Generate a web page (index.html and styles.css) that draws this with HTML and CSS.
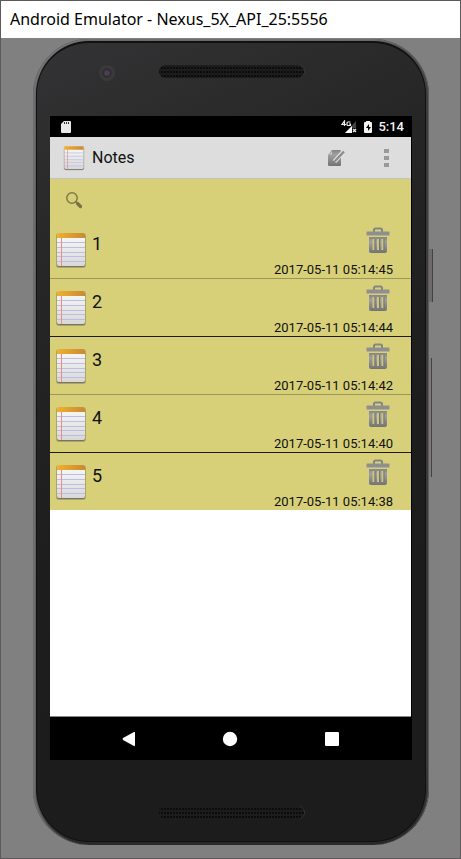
FILE: index.html
```html
<!DOCTYPE html>
<html lang="en">
<head>
<meta charset="utf-8">
<title>Android Emulator - Nexus_5X_API_25:5556</title>
<link rel="stylesheet" href="styles.css">
</head>
<body>
<svg class="defs" aria-hidden="true">
  <defs>
    <linearGradient id="binding"><stop offset="0" stop-color="#f2b02d"/><stop offset="1" stop-color="#c88a35"/></linearGradient>
    <linearGradient id="paper" x2="0" y2="1"><stop offset="0" stop-color="#fafafa"/><stop offset="1" stop-color="#d8d8d8"/></linearGradient>
    <linearGradient id="metal" x2="0" y2="1"><stop offset="0" stop-color="#858585"/><stop offset="0.3" stop-color="#a0a0a0"/><stop offset="1" stop-color="#737373"/></linearGradient>
    <pattern id="mesh" x="2" y="2" width="3" height="4" patternUnits="userSpaceOnUse"><path d="M0 0h2v2H0z" fill="#0c0c0c"/></pattern>
    <symbol id="note" viewBox="0 0 32 38">
      <rect x="1" y="2" width="30" height="35" rx="3" fill="#5b5a3c" opacity="0.35"/>
      <rect x="2" y="2" width="28" height="34" rx="2" fill="#77756a"/>
      <rect x="2" y="2" width="28" height="33" rx="2" fill="url(#paper)"/>
      <path d="M2 7V4q0-2 2-2h24q2 0 2 2v3z" fill="url(#binding)"/>
      <path d="M2 11.500h28M2 16.500h28M2 21.500h28M2 25.500h28M2 30.500h28" stroke="#bdbde2"/>
      <path d="M6.500 7v28" stroke="#f08a8a"/>
    </symbol>
    <symbol id="trash" viewBox="0 0 24 26">
      <path d="M8 5V3q0-1.500 1.500-1.500h5Q16 1.500 16 3v2" fill="none" stroke="#858581" stroke-width="2"/>
      <rect x="0.500" y="4.500" width="23" height="4" rx="0.500" fill="#8f8f8f"/>
      <path d="M3 10h18v14q0 2-2 2H5q-2 0-2-2z" fill="url(#metal)"/>
      <path d="M7.500 12v11M12 12v11M16.500 12v11" stroke="#cbc581" stroke-width="2"/>
      <path d="M9 12v11M13.500 12v11M18 12v11" stroke="#77766c"/>
    </symbol>
  </defs>
</svg>
<div class="window">
  <header class="titlebar">Android Emulator - Nexus_5X_API_25:5556</header>
  <div class="desk">
    <div class="phone">
      <span class="side-key power"></span>
      <span class="side-key volume"></span>
      <div class="bezel">
        <div class="forehead">
          <span class="camera"></span>
          <svg class="speaker"><rect width="100%" height="100%" fill="url(#mesh)"/></svg>
        </div>
        <main class="screen">
          <div class="status">
            <svg class="sd" viewBox="0 0 12 14"><path d="M4 1h6q1 0 1 1v10q0 1-1 1H2q-1 0-1-1V4z" fill="#e8e8e8"/><path d="M4.500 2v2M6.500 2v2M8.500 2v2" stroke="#333"/></svg>
            <svg class="signal" viewBox="0 0 17 14"><path d="M15 1v12H4z" fill="#444"/><path d="M11 6v7H4z" fill="#fff"/><path d="M11 8h5v5h-5z" fill="#000"/><path d="M12 9l3 3M15 9l-3 3" stroke="#eee" stroke-width="1.300"/><path d="M3.500 6V1L1 4.500h4M9.500 2H7Q6 2 6 3v1.500Q6 5.500 7 5.500h2.500V4H8" fill="none" stroke="#eee" stroke-width="1.200"/></svg>
            <svg class="battery" viewBox="0 0 10 14"><path d="M3 1h4v1h1q1 0 1 1v9q0 1-1 1H2q-1 0-1-1V3q0-1 1-1h1z" fill="#f2f2f2"/><path d="M6 4L3 8h2v3l3-4H6z" fill="#000"/></svg>
            <time>5:14</time>
          </div>
          <div class="appbar">
            <svg class="app-icon"><use href="#note"/></svg>
            <h1>Notes</h1>
            <button class="icon-button" aria-label="New note">
              <svg class="compose" viewBox="0 0 18 18"><path d="M1 6l4-5h8q1 0 1 1v14q0 1-1 1H2q-1 0-1-1z" fill="url(#metal)"/><path d="M2 5.500h3V2z" fill="#ccc"/><path d="M7.500 12.500L17 2" stroke="#ddd" stroke-width="4.500"/><path d="M9 11l8-8.500" stroke="#8a8a8a" stroke-width="2.200"/><path d="M7 13l1-3 2 2z" fill="#777"/></svg>
            </button>
            <button class="icon-button more" aria-label="More options">
              <svg class="dots" viewBox="0 0 5 18"><path d="M0 0h5v4H0zM0 7h5v4H0zM0 14h5v4H0z" fill="#999"/></svg>
            </button>
          </div>
          <label class="search">
            <svg class="lens" viewBox="0 0 18 18"><circle cx="7" cy="7" r="5.200" fill="none" stroke="#7f7b49" stroke-width="1.500"/><path d="M10.500 10.500l2 2" stroke="#777344" stroke-width="1.500"/><path d="M12.500 12.500l3 3" stroke="#777344" stroke-width="3.200" stroke-linecap="round"/></svg>
            <input type="search" aria-label="Search notes">
          </label>
          <ul class="notes">
            <li class="note"><svg class="note-icon"><use href="#note"/></svg><h2>1</h2><button class="delete" aria-label="Delete note 1"><svg><use href="#trash"/></svg></button><time>2017-05-11 05:14:45</time></li>
            <li class="note strong"><svg class="note-icon"><use href="#note"/></svg><h2>2</h2><button class="delete" aria-label="Delete note 2"><svg><use href="#trash"/></svg></button><time>2017-05-11 05:14:44</time></li>
            <li class="note"><svg class="note-icon"><use href="#note"/></svg><h2>3</h2><button class="delete" aria-label="Delete note 3"><svg><use href="#trash"/></svg></button><time>2017-05-11 05:14:42</time></li>
            <li class="note strong"><svg class="note-icon"><use href="#note"/></svg><h2>4</h2><button class="delete" aria-label="Delete note 4"><svg><use href="#trash"/></svg></button><time>2017-05-11 05:14:40</time></li>
            <li class="note"><svg class="note-icon"><use href="#note"/></svg><h2>5</h2><button class="delete" aria-label="Delete note 5"><svg><use href="#trash"/></svg></button><time>2017-05-11 05:14:38</time></li>
          </ul>
          <nav class="navbar">
            <button aria-label="Back"><svg viewBox="0 0 16 16"><path d="M13 1q1-.5 1 1v12q0 1.500-1 1L2 9q-1-1 0-2z" fill="#fff"/></svg></button>
            <button aria-label="Home"><svg viewBox="0 0 16 16"><circle cx="8" cy="8" r="7.200" fill="#fff"/></svg></button>
            <button aria-label="Overview"><svg viewBox="0 0 16 16"><rect x="1" y="1" width="14" height="14" rx="1" fill="#fff"/></svg></button>
          </nav>
        </main>
        <div class="chin">
          <svg class="speaker"><rect width="100%" height="100%" fill="url(#mesh)"/></svg>
        </div>
      </div>
    </div>
  </div>
</div>
</body>
</html>
```
FILE: styles.css
```css
* { box-sizing: border-box; }
body { margin: 0; font-family: Roboto, sans-serif; color: #111; }
button { border: 0; padding: 0; background: none; display: flex; align-items: center; justify-content: center; }
svg { display: block; }
h1, h2 { margin: 0; font-weight: 400; }
.defs { position: absolute; width: 0; height: 0; }

.window {
  min-height: 100vh;
  display: flex;
  flex-direction: column;
  border: 1px solid #5b5959;
  background: #808080;
}
.titlebar {
  height: 37px;
  padding-left: 9px;
  background: #fff;
  color: #000;
  font: 16px/37px "Noto Sans", sans-serif;
}
.desk { flex: 1; display: flex; padding: 1px 31px 13px 32px; }

.phone {
  position: relative;
  flex: 1;
  display: flex;
  padding: 2px 3px 3px;
  border-radius: 56px;
  background: linear-gradient(#505050, #3d3b3c 60px, #3a3839 90%, #2a2829);
  box-shadow: inset 1px 0 #6c6c6c, inset -1px 0 #5c5a5b, inset 3px 2px 3px #777;
}
.side-key { position: absolute; left: 100%; background: #6c6a6b; border-right: 1px solid #444243; }
.power { top: 210px; width: 4px; height: 53px; }
.volume { top: 319px; width: 3px; height: 119px; background: #7c7a7b; }

.bezel {
  flex: 1;
  display: flex;
  flex-direction: column;
  padding: 0 13px;
  border: 2px solid #111;
  border-width: 2px 1px 1px;
  border-radius: 53px;
  background: linear-gradient(155deg, #333335, #262626 25%, #1d1d1d 55%, #1c1c1c);
}
.forehead {
  height: 73px;
  padding-top: 22px;
  display: grid;
  grid-template-columns: 1fr auto 1fr;
  align-items: start;
}
.camera {
  width: 16px;
  height: 16px;
  margin-left: 49px;
  border-radius: 50%;
  background: radial-gradient(circle, #4b3f50 0 2px, #29262f 4px, #39393b 5px);
}
.speaker { grid-column: 2; width: 145px; height: 13px; border-radius: 7px; background: #1c1c1c; box-shadow: 1px 0 #363636; }
.chin { height: 81px; display: flex; justify-content: center; padding-top: 46px; }

.screen {
  flex: 1;
  display: flex;
  flex-direction: column;
  background: #fff;
  border-right: 1px solid #000;
}
.status {
  height: 21px;
  padding: 0 7px 0 10px;
  display: flex;
  align-items: center;
  background: #000;
  color: #f2f2f2;
  font-size: 13px;
  font-weight: 500;
}
.sd { width: 12px; height: 14px; margin-right: auto; }
.signal { width: 17px; height: 14px; margin-right: 5px; }
.battery { width: 10px; height: 14px; margin-right: 5px; }

.appbar {
  height: 42px;
  padding: 0 8px 0 12px;
  display: flex;
  align-items: center;
  background: #ddd;
  border-bottom: 1px solid #c3c3c3;
}
.app-icon { width: 24px; height: 26px; margin-right: 6px; }
.appbar h1 { margin-right: auto; font-size: 16px; line-height: 20px; }
.icon-button { width: 50px; height: 40px; }
.more { width: 34px; margin-left: 8px; }
.compose { width: 18px; height: 18px; }
.dots { width: 5px; height: 18px; }

.search { height: 42px; padding: 0 15px; display: flex; align-items: center; gap: 8px; background: #d7d079; }
.lens { width: 18px; height: 18px; }
.search input { flex: 1; min-width: 0; border: 0; outline: 0; background: none; font: 16px Roboto, sans-serif; }

.notes { margin: 0; padding: 0; list-style: none; }
.note {
  height: 58px;
  padding: 6px 18px 0 5px;
  display: grid;
  grid-template: 34px 17px / 32px 1fr auto;
  column-gap: 5px;
  background: #d7d079;
  border-bottom: 1px solid #9b965a;
}
.strong { border-color: #1b1b12; }
.note:last-child { height: 57px; border-bottom: 0; }
.note-icon { grid-row: 1 / 3; width: 32px; height: 38px; margin-top: 4px; }
.note h2 { padding-top: 6px; font-size: 18px; line-height: 22px; }
.delete { justify-self: end; align-self: start; margin-right: 3px; }
.delete svg { width: 24px; height: 26px; }
.note time { grid-column: 2 / 4; justify-self: end; font-size: 13px; line-height: 17px; }

.navbar {
  height: 44px;
  margin-top: auto;
  padding: 0 28px;
  display: grid;
  grid-template-columns: repeat(3, 1fr);
  background: #000;
  border-top: 1px solid #888;
}
.navbar svg { width: 16px; height: 16px; }
```
